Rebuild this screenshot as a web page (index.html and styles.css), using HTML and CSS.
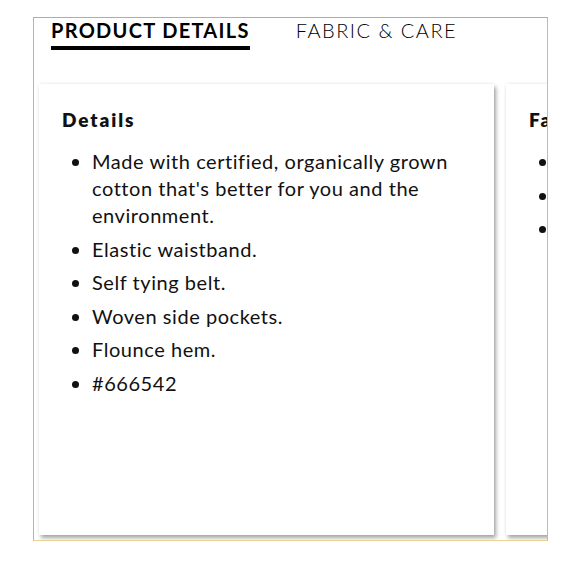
FILE: index.html
```html
<!DOCTYPE html>
<html>
<head>
<meta charset="utf-8">
<link rel="stylesheet" href="styles.css">
</head>
<body>
<div class="panel">
  <div class="tabs">
    <div class="tab active">PRODUCT DETAILS</div>
    <div class="tab">FABRIC &amp; CARE</div>
  </div>
  <div class="cards">
    <div class="card">
      <h3 class="card-title">Details</h3>
      <ul class="list">
        <li>Made with certified, organically grown cotton that's better for you and the environment.</li>
        <li>Elastic waistband.</li>
        <li>Self tying belt.</li>
        <li>Woven side pockets.</li>
        <li>Flounce hem.</li>
        <li>#666542</li>
      </ul>
    </div>
    <div class="card">
      <h3 class="card-title">Fabric &amp; Care</h3>
      <ul class="list">
        <li>100% Cotton.</li>
        <li>Machine wash.</li>
        <li>Imported.</li>
      </ul>
    </div>
  </div>
</div>
</body>
</html>
```
FILE: styles.css
```css
html, body {
  margin: 0;
  padding: 0;
  background: #ffffff;
}
body {
  font-family: Lato, "Liberation Sans", sans-serif;
  color: #111;
}
.panel {
  box-sizing: border-box;
  width: 515px;
  height: 524px;
  margin: 17px 0 0 33px;
  border: 1px solid #ead290;
  border-top-color: #d6ad45;
  border-left-color: #dbb552;
  border-right-color: #dfbb5c;
  overflow: hidden;
  display: flex;
  flex-direction: column;
}
.tabs {
  display: flex;
  gap: 46px;
  padding-left: 17px;
  height: 66px;
}
.tab {
  font-size: 20px;
  line-height: 24px;
  height: 24px;
  letter-spacing: 1.5px;
  color: #000;
  font-weight: 300;
  padding-bottom: 4px;
}
.tab.active {
  font-weight: 700;
  letter-spacing: 1.3px;
  border-bottom: 4px solid #000;
  padding-bottom: 4px;
}
.cards {
  display: flex;
  gap: 12px;
  padding-left: 5px;
  flex: 1;
  padding-bottom: 5px;
}
.card {
  flex: 0 0 455px;
  box-sizing: border-box;
  background: #fff;
  box-shadow: 2px 3px 4px rgba(0,0,0,0.35), 0 -1px 3px rgba(0,0,0,0.06);
  padding: 24px 23px;
}
.card-title {
  margin: 0 0 16px 0;
  font-size: 19px;
  line-height: 24px;
  font-weight: 800;
  letter-spacing: 1.9px;
}
.list {
  margin: 0;
  padding-left: 30px;
  font-size: 20px;
  line-height: 27px;
  letter-spacing: 0.55px;
}
.list li {
  margin-bottom: 6.6px;
}
```
